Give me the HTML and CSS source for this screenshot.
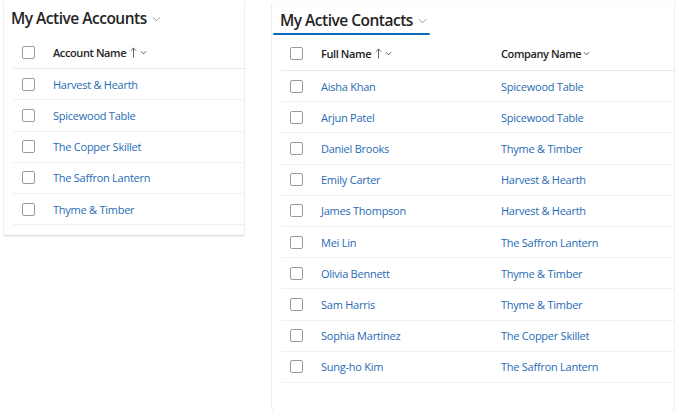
FILE: index.html
```html
<!DOCTYPE html>
<html>
<head>
<meta charset="utf-8">
<link rel="stylesheet" href="styles.css">
</head>
<body>
<div class="board">
  <section class="card card-accounts">
    <div class="card-head">
      <h2 class="title">My Active Accounts</h2>
      <svg class="title-chev" viewBox="0 0 10 6" width="9" height="6"><path d="M1 1 L5 5 L9 1" fill="none" stroke="#8a8a8a" stroke-width="1"/></svg>
    </div>
    <div class="grid">
      <div class="row header">
        <span class="check"></span>
        <span class="col col-a">Account Name<svg class="arrow" viewBox="0 0 7 11" width="7" height="11"><path d="M3.5 10.5 V1 M0.8 3.7 L3.5 1 L6.2 3.7" fill="none" stroke="#555" stroke-width="0.9"/></svg><svg class="hchev" viewBox="0 0 8 5" width="7" height="5"><path d="M1 1 L4 4 L7 1" fill="none" stroke="#444" stroke-width="1"/></svg></span>
      </div>
      <div class="row"><span class="check"></span><a class="col col-a link">Harvest &amp; Hearth</a></div>
      <div class="row"><span class="check"></span><a class="col col-a link">Spicewood Table</a></div>
      <div class="row"><span class="check"></span><a class="col col-a link">The Copper Skillet</a></div>
      <div class="row"><span class="check"></span><a class="col col-a link">The Saffron Lantern</a></div>
      <div class="row"><span class="check"></span><a class="col col-a link">Thyme &amp; Timber</a></div>
    </div>
  </section>

  <section class="card card-contacts">
    <div class="card-head">
      <h2 class="title active">My Active Contacts</h2>
      <svg class="title-chev" viewBox="0 0 10 6" width="9" height="6"><path d="M1 1 L5 5 L9 1" fill="none" stroke="#8a8a8a" stroke-width="1"/></svg>
      <span class="underline"></span>
    </div>
    <div class="grid">
      <div class="row header">
        <span class="check"></span>
        <span class="col col-name">Full Name<svg class="arrow" viewBox="0 0 7 11" width="7" height="11"><path d="M3.5 10.5 V1 M0.8 3.7 L3.5 1 L6.2 3.7" fill="none" stroke="#555" stroke-width="0.9"/></svg><svg class="hchev" viewBox="0 0 8 5" width="7" height="5"><path d="M1 1 L4 4 L7 1" fill="none" stroke="#444" stroke-width="1"/></svg></span>
        <span class="col col-co">Company Name<svg class="hchev" viewBox="0 0 8 5" width="7" height="5"><path d="M1 1 L4 4 L7 1" fill="none" stroke="#444" stroke-width="1"/></svg></span>
      </div>
      <div class="row"><span class="check"></span><a class="col col-name link">Aisha Khan</a><a class="col col-co link">Spicewood Table</a></div>
      <div class="row"><span class="check"></span><a class="col col-name link">Arjun Patel</a><a class="col col-co link">Spicewood Table</a></div>
      <div class="row"><span class="check"></span><a class="col col-name link">Daniel Brooks</a><a class="col col-co link">Thyme &amp; Timber</a></div>
      <div class="row"><span class="check"></span><a class="col col-name link">Emily Carter</a><a class="col col-co link">Harvest &amp; Hearth</a></div>
      <div class="row"><span class="check"></span><a class="col col-name link">James Thompson</a><a class="col col-co link">Harvest &amp; Hearth</a></div>
      <div class="row"><span class="check"></span><a class="col col-name link">Mei Lin</a><a class="col col-co link">The Saffron Lantern</a></div>
      <div class="row"><span class="check"></span><a class="col col-name link">Olivia Bennett</a><a class="col col-co link">Thyme &amp; Timber</a></div>
      <div class="row"><span class="check"></span><a class="col col-name link">Sam Harris</a><a class="col col-co link">Thyme &amp; Timber</a></div>
      <div class="row"><span class="check"></span><a class="col col-name link">Sophia Martinez</a><a class="col col-co link">The Copper Skillet</a></div>
      <div class="row"><span class="check"></span><a class="col col-name link">Sung-ho Kim</a><a class="col col-co link">The Saffron Lantern</a></div>
    </div>
  </section>
</div>
</body>
</html>
```

FILE: styles.css
```css
html, body {
  margin: 0;
  padding: 0;
  background: #ffffff;
  font-family: "Open Sans", "Noto Sans", "Liberation Sans", sans-serif;
  color: #242424;
}

.board {
  display: flex;
  align-items: flex-start;
  gap: 28px;
  padding-left: 4px;
}

.card {
  background: #fff;
  box-shadow: 0 1px 2px rgba(0,0,0,0.18), 0 0 1px rgba(0,0,0,0.12);
  border-radius: 0 0 2px 2px;
}

.card-accounts {
  width: 240px;
  padding-bottom: 10px;
}

.card-contacts {
  width: 402px;
  padding-bottom: 27px;
  margin-top: 2px;
}

.card-head {
  position: relative;
  height: 36px;
  display: flex;
  align-items: center;
  padding-left: 7px;
  gap: 5px;
}

.card-contacts .card-head {
  height: 35px;
  padding-left: 8px;
}

.title {
  margin: 0;
  font-size: 15.5px;
  font-weight: 600;
  color: #242424;
  letter-spacing: -0.5px;
}

.title-chev {
  margin-top: 2px;
}

.underline {
  position: absolute;
  left: 1px;
  bottom: 2px;
  width: 157px;
  height: 2px;
  border-radius: 1px;
  background: #0f6cbd;
}

.grid {
  margin-left: 9px;
}

.row {
  display: flex;
  align-items: center;
  height: 30.25px;
  border-bottom: 1px solid #f0f0f0;
  font-size: 11px;
  letter-spacing: -0.25px;
}

.card-contacts .row {
  height: 30.2px;
}

.row.header {
  height: 32px;
  border-bottom-color: #e8e8e8;
}

.card-contacts .row.header {
  height: 33px;
}

.check {
  flex: none;
  width: 11px;
  height: 11px;
  border: 1px solid #9a9a9a;
  border-radius: 2px;
  margin-left: 9px;
  margin-right: 18px;
}

.col {
  white-space: nowrap;
}

.col-name {
  width: 180px;
}

.header .col {
  font-weight: 600;
  color: #242424;
  display: inline-flex;
  align-items: center;
  letter-spacing: -0.4px;
}

.arrow {
  margin-left: 4px;
  margin-right: 1px;
}

.hchev {
  margin-left: 2px;
}

.link {
  color: #1f6bb5;
  text-decoration: none;
}
```
